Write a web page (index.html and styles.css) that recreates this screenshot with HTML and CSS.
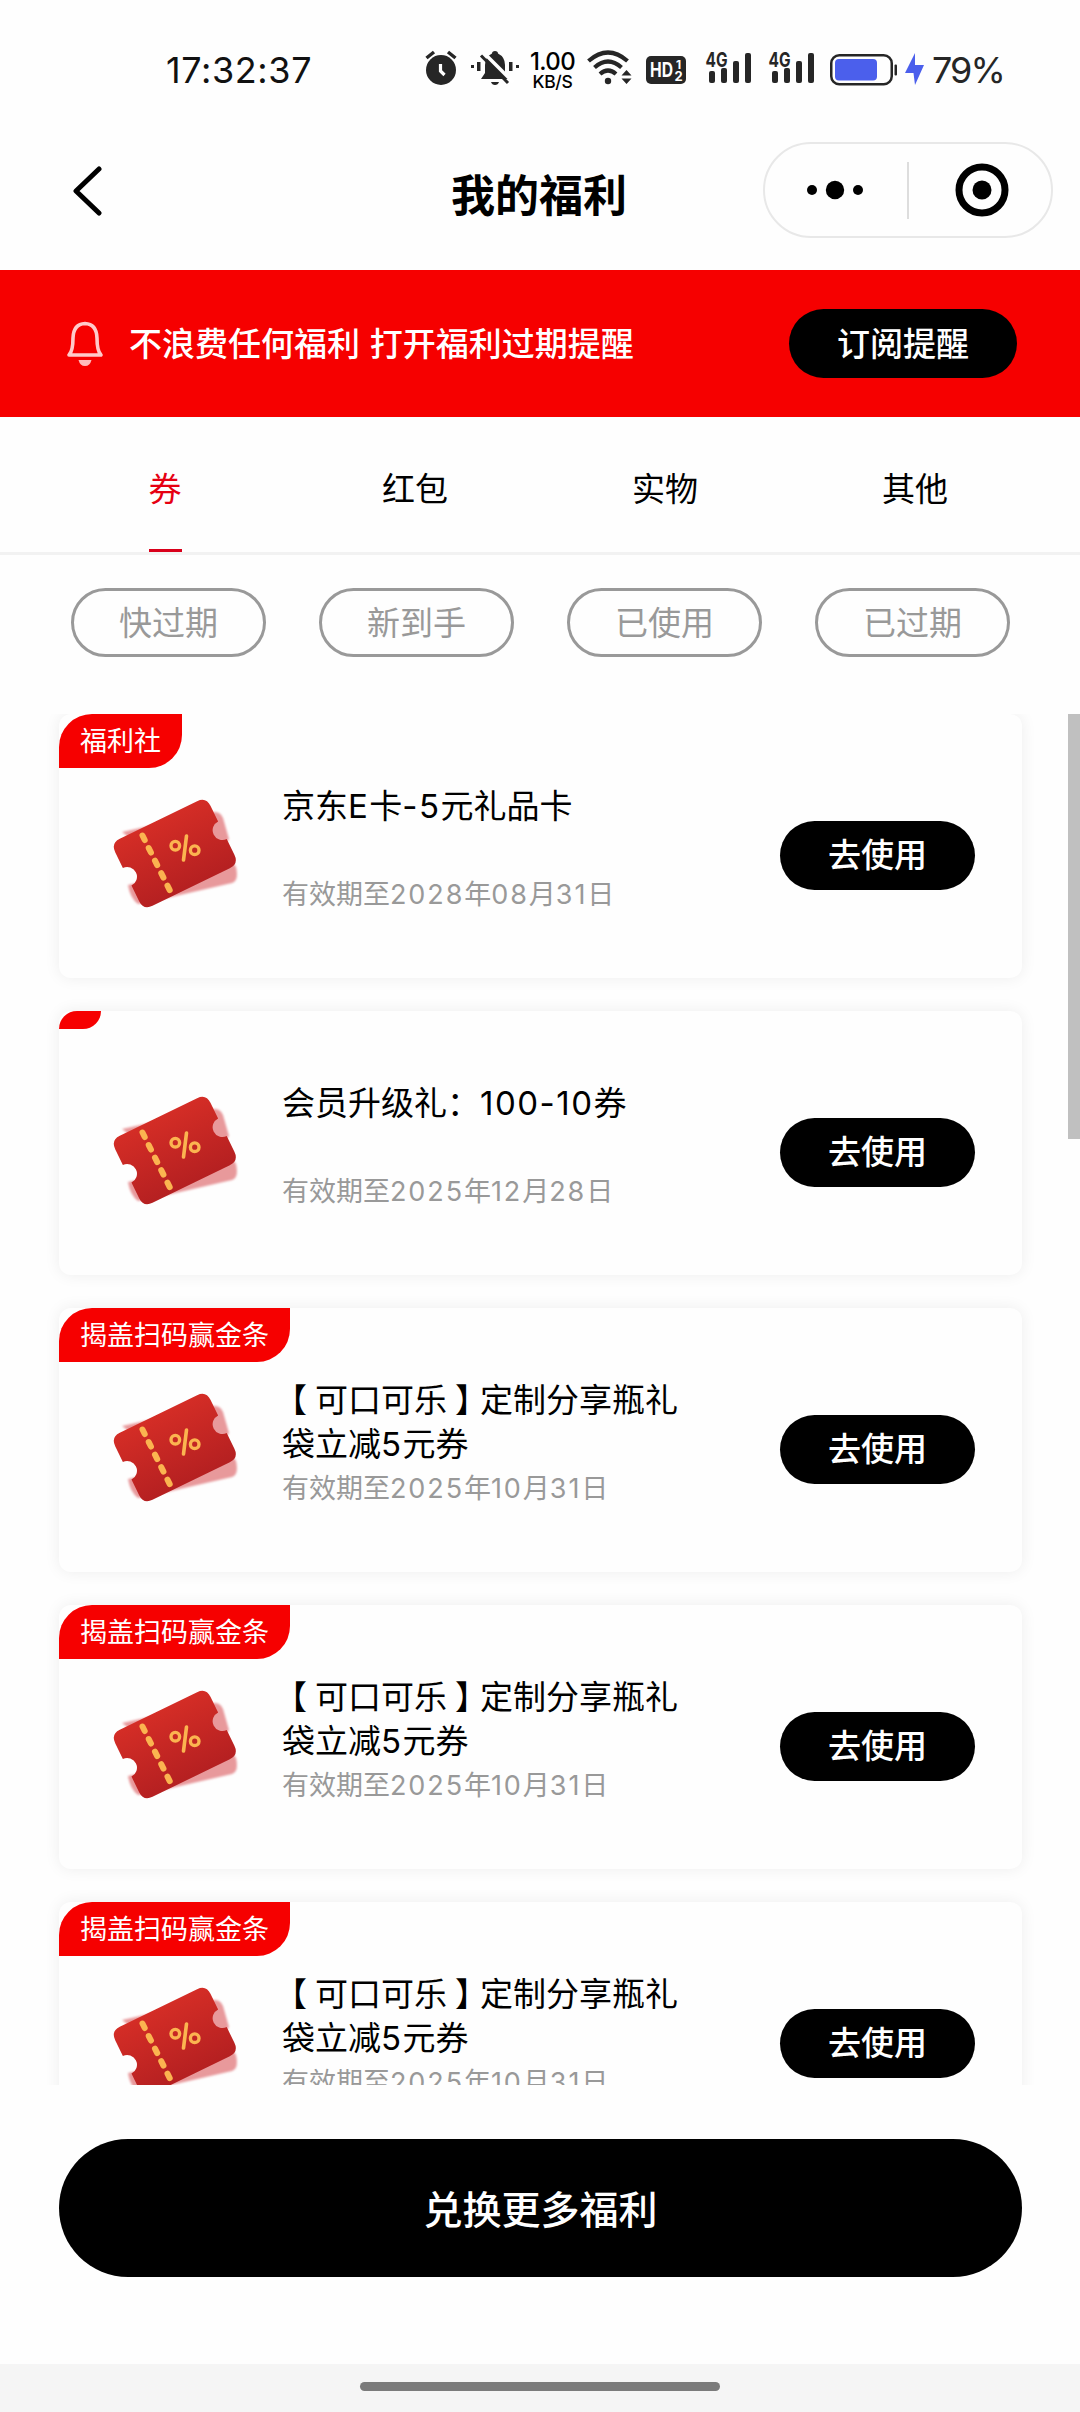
FILE: index.html
```html
<!DOCTYPE html>
<html lang="zh-CN">
<head>
<meta charset="utf-8">
<title>我的福利</title>
<link rel="stylesheet" href="styles.css">
</head>
<body>
<svg width="0" height="0" class="defs" aria-hidden="true">
  <defs>
    <linearGradient id="red" x1="0" y1="0" x2="0" y2="1">
      <stop offset="0" stop-color="#d42d26"/>
      <stop offset="1" stop-color="#b52021"/>
    </linearGradient>
    <filter id="soft" x="-10%" y="-10%" width="120%" height="120%"><feGaussianBlur stdDeviation="1.3"/></filter>
    <symbol id="ticket" viewBox="0 0 134 114">
      <path d="M14 35 L106 15 Q112 14 115 21 L121 42 L114 50 L128 70 Q131 84 124 86 L46 104 L30 107 Q22 101 20 88 L38 84 L34 50Z" fill="#e8999b" filter="url(#soft)"/>
      <path transform="translate(66.800 56.500) rotate(-26)" d="M-43 -37.300 H43 Q53 -37.300 53 -27.300 V-9.800 A9.800 9.800 0 0 0 53 9.800 V27.300 Q53 37.300 43 37.300 H-43 Q-53 37.300 -53 27.300 V9.800 A9.800 9.800 0 0 0 -53 -9.800 V-27.300 Q-53 -37.300 -43 -37.300Z" fill="url(#red)"/>
      <g fill="none" stroke="#fbb450" stroke-linecap="round">
        <path transform="translate(66.800 56.500) rotate(-26.500)" d="M-20.900 -30.500 V31" stroke-width="6" stroke-dasharray="5 9"/>
        <circle cx="67.300" cy="48.700" r="4.300" stroke-width="3.400"/>
        <circle cx="86.700" cy="53.200" r="4.300" stroke-width="3.400"/>
        <path d="M78.500 39 L75.500 63" stroke-width="3.600"/>
      </g>
    </symbol>
    <symbol id="signal" viewBox="0 0 48 36">
      <g fill="#262626">
        <rect x="4" y="21" width="6" height="12" rx="2"/>
        <rect x="16" y="18" width="6" height="15" rx="2"/>
        <rect x="28" y="11" width="6" height="22" rx="2"/>
        <rect x="40" y="3" width="6" height="30" rx="2"/>
      </g>
      <text x="0.500" y="16.500" class="net" textLength="22" lengthAdjust="spacingAndGlyphs">4G</text>
    </symbol>
  </defs>
</svg>

<div class="screen">
  <header class="status">
    <span class="time">17:32:37</span>
    <div class="status-icons">
      <svg class="alarm" width="32" height="36" viewBox="0 0 32 36"><circle cx="16" cy="20" r="15" fill="#262626"/><path d="M1.500 8 L9 2 M30.500 8 L23 2" stroke="#262626" stroke-width="3.500"/><path d="M15.500 14 V21 L19.500 25" fill="none" stroke="#fff" stroke-width="3.200"/></svg>
      <svg class="mute" width="50" height="36" viewBox="0 0 50 36"><g fill="#262626"><path d="M25 1 Q28 1 28 3.500 Q35 7 35 15 V23 L39 29 H11 L15 23 V15 Q15 7 22 3.500 Q22 1 25 1Z"/><path d="M21 32 H29 Q28 35 25 35 Q22 35 21 32Z"/><rect x="1" y="15" width="3" height="3"/><rect x="7" y="12" width="3.500" height="9"/><rect x="39" y="12" width="3.500" height="9"/><rect x="46" y="15" width="3" height="3"/></g><path d="M15 4 L43 32" stroke="#fff" stroke-width="3.500"/><path d="M11 5.500 L38 33" stroke="#262626" stroke-width="3"/></svg>
      <div class="speed"><b>1.00</b><small>KB/S</small></div>
      <svg class="wifi" width="46" height="36" viewBox="0 0 46 36"><g fill="none" stroke="#262626" stroke-width="4.200"><path d="M1.500 11 Q21 -6 40.500 11"/><path d="M7.500 17.500 Q21 5.500 34.500 17.500"/><path d="M13 24 Q21 17 29 24"/></g><circle cx="21" cy="31" r="3.200" fill="#262626"/><path d="M34.500 25.500 L39.500 20 L44.500 25.500Z M34.500 28.500 L39.500 34 L44.500 28.500Z" fill="#262626"/></svg>
      <svg class="hd" width="40" height="30" viewBox="0 0 40 30"><rect width="40" height="28" y="1" rx="5" fill="#262626"/><g class="hd-text"><text x="4" y="22" font-size="20" textLength="23" lengthAdjust="spacingAndGlyphs">HD</text><text x="30" y="13.500" font-size="12">1</text><text x="28.500" y="25.500" font-size="13">2</text></g></svg>
      <svg class="sig" width="48" height="36"><use href="#signal"/></svg>
      <svg class="sig" width="48" height="36"><use href="#signal"/></svg>
      <svg class="battery" width="68" height="32" viewBox="0 0 68 32"><rect x="1.250" y="1.250" width="60.500" height="29" rx="8" fill="none" stroke="#262626" stroke-width="2.500"/><rect x="5" y="5" width="42" height="21.500" rx="4" fill="#4b5fec"/><rect x="64.500" y="10.500" width="2.500" height="11" rx="1" fill="#262626"/></svg>
      <svg class="bolt" width="20" height="34" viewBox="0 0 20 34"><path d="M11 1 L1 21 H9.500 L11 33 L20 13 H11Z" fill="#4b5fec"/></svg>
      <span class="percent">79%</span>
    </div>
  </header>

  <nav class="titlebar">
    <svg class="back" width="32" height="50" viewBox="0 0 32 50"><path d="M28 3 L5 25 L28 47" fill="none" stroke="#000" stroke-width="5" stroke-linecap="round" stroke-linejoin="round"/></svg>
    <h1>我的福利</h1>
    <div class="capsule">
      <svg width="58" height="22" viewBox="0 0 58 22"><circle cx="6" cy="11" r="5"/><circle cx="29" cy="11" r="9.200"/><circle cx="52" cy="11" r="5"/></svg>
      <i></i>
      <svg width="54" height="54" viewBox="0 0 54 54"><circle cx="27" cy="27" r="23" fill="none" stroke="#000" stroke-width="7"/><circle cx="27" cy="27" r="9.500"/></svg>
    </div>
  </nav>

  <section class="banner">
    <svg class="bell" width="40" height="48" viewBox="0 0 40 48"><g fill="none" stroke="#ffcaca" stroke-width="3.600" stroke-linejoin="round"><path d="M4 35 Q8 31 8 18 Q8.500 4 20 3.500 Q31.500 4 32 18 Q32 31 36 35Z"/></g><path d="M13.500 40 H26.500 Q25 46 20 46 Q15 46 13.500 40Z" fill="#ffbcbc"/></svg>
    <p>不浪费任何福利 打开福利过期提醒</p>
    <button class="pill subscribe">订阅提醒</button>
  </section>

  <div class="tabs">
    <span class="tab active">券</span><span class="tab">红包</span><span class="tab">实物</span><span class="tab">其他</span>
  </div>

  <div class="filters">
    <button>快过期</button><button>新到手</button><button>已使用</button><button>已过期</button>
  </div>

  <main class="list">
    <article class="card">
      <span class="tag">福利社</span>
      <svg class="ticket"><use href="#ticket"/></svg>
      <div class="info"><h2>京东<span class="wide">E</span>卡<span class="wide">-5</span>元礼品卡</h2><p>有效期至<span class="num">2028</span>年<span class="num">08</span>月<span class="num">31</span>日</p></div>
      <button class="pill">去使用</button>
    </article>
    <article class="card">
      <span class="tag"></span>
      <svg class="ticket"><use href="#ticket"/></svg>
      <div class="info"><h2>会员升级礼：<span class="wide">100-10</span>券</h2><p>有效期至<span class="num">2025</span>年<span class="num">12</span>月<span class="num">28</span>日</p></div>
      <button class="pill">去使用</button>
    </article>
    <article class="card">
      <span class="tag">揭盖扫码赢金条</span>
      <svg class="ticket"><use href="#ticket"/></svg>
      <div class="info"><h2><span class="open">【</span>可口可乐<span class="close">】</span>定制分享瓶礼袋立减<span class="wide">5</span>元券</h2><p>有效期至<span class="num">2025</span>年<span class="num">10</span>月<span class="num">31</span>日</p></div>
      <button class="pill">去使用</button>
    </article>
    <article class="card">
      <span class="tag">揭盖扫码赢金条</span>
      <svg class="ticket"><use href="#ticket"/></svg>
      <div class="info"><h2><span class="open">【</span>可口可乐<span class="close">】</span>定制分享瓶礼袋立减<span class="wide">5</span>元券</h2><p>有效期至<span class="num">2025</span>年<span class="num">10</span>月<span class="num">31</span>日</p></div>
      <button class="pill">去使用</button>
    </article>
    <article class="card">
      <span class="tag">揭盖扫码赢金条</span>
      <svg class="ticket"><use href="#ticket"/></svg>
      <div class="info"><h2><span class="open">【</span>可口可乐<span class="close">】</span>定制分享瓶礼袋立减<span class="wide">5</span>元券</h2><p>有效期至<span class="num">2025</span>年<span class="num">10</span>月<span class="num">31</span>日</p></div>
      <button class="pill">去使用</button>
    </article>
    <div class="scrollbar"></div>
  </main>

  <footer class="bottom"><button class="more">兑换更多福利</button></footer>
  <div class="gesture"><i></i></div>
</div>
</body>
</html>
```
FILE: styles.css
```css
* { box-sizing: border-box; margin: 0; padding: 0; }
body { background: #fefefe; color: #000; font-family: "Inter", "Noto Sans CJK SC", sans-serif; font-size: 33px; }
button { border: 0; background: none; font: inherit; color: inherit; }
svg { display: block; flex: none; }
.defs { position: absolute; }
.screen { width: 1080px; height: 2412px; display: flex; flex-direction: column; overflow: hidden; }
.screen > * { flex: none; }

.status { height: 142px; display: flex; align-items: flex-start; padding: 50px 0 0 166px; color: #262626; }
.time { width: 259px; margin-top: -1px; font: 36px/42px "Inter", sans-serif; letter-spacing: .6px; color: #111; }
.status-icons { display: flex; align-items: flex-start; }
.mute { margin-left: 13px; }
.speed { margin-left: 8px; width: 49px; height: 40px; display: flex; flex-direction: column; align-items: center; color: #000; }
.speed b { font: 500 24px/23px "Inter", sans-serif; letter-spacing: -.6px; }
.speed small { font: 500 17.500px/17px "Inter", sans-serif; letter-spacing: -.3px; }
.wifi { margin-left: 10px; }
.hd { margin: 5px 0 0 13px; }
.hd-text { fill: #fff; font-family: "Inter", sans-serif; font-weight: 700; }
.sig { margin-left: 19px; }
.sig + .sig { margin-left: 15px; }
.net { font: 700 20px "Inter", sans-serif; fill: #262626; stroke: #fff; stroke-width: 2px; paint-order: stroke; }
.battery { margin: 4px 0 0 14px; }
.bolt { margin: 2px 0 0 6px; }
.percent { margin: -1px 0 0 8px; font: 36px/42px "Inter", sans-serif; letter-spacing: -1.900px; }

.titlebar { height: 128px; display: grid; grid-template-columns: 378px 180px 1fr; padding: 0 27px 0 71px; }
.back { margin-top: 24px; }
h1 { text-align: center; font-size: 44px; font-weight: 700; line-height: 60px; margin-top: 24px; white-space: nowrap; }
.capsule { justify-self: end; width: 290px; height: 96px; border: 2px solid #e8e8e8; border-radius: 48px; display: flex; align-items: center; padding-left: 41px; }
.capsule i { width: 2px; height: 57px; background: #ddd; margin: 0 46px 0 43px; }

.banner { height: 147px; background: #f60000; color: #fff; display: flex; align-items: center; padding: 0 63px 0 65px; font-weight: 500; }
.banner p { margin: -3px auto 0 24px; white-space: nowrap; word-spacing: 1px; }
.pill { width: 195px; height: 69px; border-radius: 35px; background: #000; color: #fff; font-weight: 500; line-height: 69px; text-align: center; }
.subscribe { width: 228px; padding-top: 1px; }

.tabs { height: 138px; border-bottom: 3px solid #f2f2f2; display: flex; padding: 0 40px; }
.tab { width: 250px; display: flex; justify-content: center; line-height: 145px; height: 135px; }
.active { color: #e60012; background: linear-gradient(#d9001b, #d9001b) center bottom / 33px 3px no-repeat; }

.filters { height: 159px; display: flex; gap: 53px; padding: 33px 0 0 71px; color: #999; }
.filters button { width: 195px; height: 69px; border: 3px solid #999; border-radius: 35px; line-height: 63px; padding-top: 1px; }

.list { position: relative; height: 1371px; overflow: hidden; display: flex; flex-direction: column; gap: 33px; padding: 0 58px 0 59px; }
.card { position: relative; flex: none; height: 264px; border-radius: 12px; box-shadow: 0 0 16px rgba(0,0,0,.07); background: #fefefe; display: flex; padding-left: 49px; }
.tag { position: absolute; left: 0; top: 0; padding: 10px 21px 8px; min-height: 18px; font-size: 27px; line-height: 36px; color: #fff; background: #f60000; border-radius: 33px 0; white-space: nowrap; }
.ticket { width: 134px; height: 114px; margin-top: 83px; }
.info { width: 396px; margin: 70px 102px 0 40px; }
h2 { font-size: 33px; font-weight: 400; line-height: 44px; height: 88px; width: 400px; }
.wide { letter-spacing: 1.500px; }
.open { margin: 0 8px 0 -8px; }
.close { margin: 0 -8px 0 8px; }
.info p { color: #999; font-size: 27px; line-height: 44px; padding-top: 1px; white-space: nowrap; }
.num { letter-spacing: 1.900px; }
.card .pill { margin-top: 107px; }
.scrollbar { position: absolute; right: 0; top: 0; width: 12px; height: 425px; background: #c0c0c0; }

.bottom { height: 279px; padding: 54px 58px 0 59px; }
.more { width: 963px; height: 138px; border-radius: 69px; background: #000; color: #fff; font-size: 39px; font-weight: 500; padding-bottom: 3px; }
.gesture { height: 48px; background: #f5f5f5; display: flex; justify-content: center; padding-top: 18px; }
.gesture i { width: 360px; height: 9px; border-radius: 5px; background: #7b7b7b; }
```
